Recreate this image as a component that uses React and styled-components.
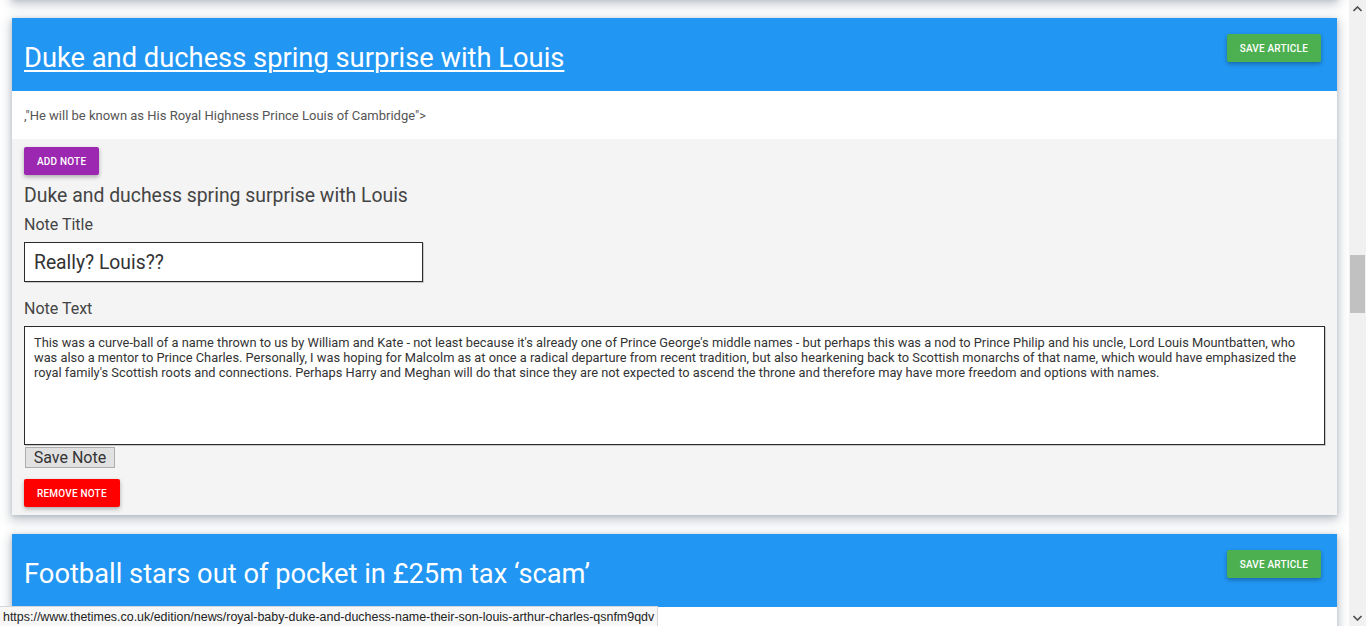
import styled, { createGlobalStyle } from "styled-components";

const GlobalStyle = createGlobalStyle`
  html, body {
    margin: 0;
    padding: 0;
    background: #ffffff;
    overflow: hidden;
  }
  body {
    font-family: Roboto, "Liberation Sans", sans-serif;
  }
`;

const noteText =
  "This was a curve-ball of a name thrown to us by William and Kate - not least because it's already one of Prince George's middle names - but perhaps this was a nod to Prince Philip and his uncle, Lord Louis Mountbatten, who was also a mentor to Prince Charles. Personally, I was hoping for Malcolm as at once a radical departure from recent tradition, but also hearkening back to Scottish monarchs of that name, which would have emphasized the royal family's Scottish roots and connections. Perhaps Harry and Meghan will do that since they are not expected to ascend the throne and therefore may have more freedom and options with names.";

export default function App() {
  return (
    <>
      <GlobalStyle />
      <Screen>
        <Viewport>
          <Feed>
            <Card $stub />

            <Card>
              <CardHeader>
                <Title href="#" $link>
                  Duke and duchess spring surprise with Louis
                </Title>
                <MiniButton $bg="#4caf50">Save Article</MiniButton>
              </CardHeader>
              <Summary>
                ,"He will be known as His Royal Highness Prince Louis of
                Cambridge"&gt;
              </Summary>
              <NotePanel>
                <MiniButton $bg="#9c27b0">Add Note</MiniButton>
                <NoteHeading>Duke and duchess spring surprise with Louis</NoteHeading>
                <FieldLabel>Note Title</FieldLabel>
                <TitleInput defaultValue="Really? Louis??" />
                <FieldLabel $gap={17}>Note Text</FieldLabel>
                <NoteArea defaultValue={noteText} />
                <SaveNote>Save Note</SaveNote>
                <MiniButton $bg="#ff0000" $top={11}>
                  Remove Note
                </MiniButton>
              </NotePanel>
            </Card>

            <Card>
              <CardHeader>
                <Title as="div">
                  Football stars out of pocket in £25m tax ‘scam’
                </Title>
                <MiniButton $bg="#4caf50">Save Article</MiniButton>
              </CardHeader>
              <Summary />
            </Card>
          </Feed>
        </Viewport>

        <Scrollbar>
          <ScrollArrow>
            <svg width="9" height="6" viewBox="0 0 9 6">
              <path d="M0.5 5 L4.5 1 L8.5 5" fill="none" stroke="#505050" strokeWidth="1.6" />
            </svg>
          </ScrollArrow>
          <Track>
            <Thumb />
          </Track>
          <ScrollArrow>
            <svg width="9" height="6" viewBox="0 0 9 6">
              <path d="M0.5 1 L4.5 5 L8.5 1" fill="none" stroke="#505050" strokeWidth="1.6" />
            </svg>
          </ScrollArrow>
        </Scrollbar>
      </Screen>

      <StatusBubble>
        https://www.thetimes.co.uk/edition/news/royal-baby-duke-and-duchess-name-their-son-louis-arthur-charles-qsnfm9qdv
      </StatusBubble>
    </>
  );
}

const Screen = styled.div`
  width: 1366px;
  height: 626px;
  display: flex;
  overflow: hidden;
`;

const Viewport = styled.div`
  flex: 1;
  overflow: hidden;
  padding: 0 12px;
`;

const Feed = styled.div`
  display: flex;
  flex-direction: column;
  gap: 19px;
  margin-top: -61px;
`;

const Card = styled.div`
  background: #ffffff;
  height: ${(p) => (p.$stub ? "60px" : "auto")};
  flex-shrink: 0;
  box-shadow: 0 4px 10px 2px rgba(60, 80, 100, 0.28),
    0 1px 4px rgba(60, 80, 100, 0.2);
`;

const CardHeader = styled.div`
  height: 73px;
  box-sizing: border-box;
  background: #2196f3;
  display: flex;
  justify-content: space-between;
  align-items: flex-start;
  padding: 16px 16px 0 12px;
`;

const Title = styled.a`
  margin-top: 8px;
  font-size: 27.3px;
  line-height: 33px;
  font-weight: 400;
  color: #ffffff;
  text-decoration: ${(p) => (p.$link ? "underline" : "none")};
  text-decoration-thickness: 1.5px;
  text-underline-offset: 3px;
`;

const MiniButton = styled.button`
  align-self: flex-start;
  height: 28px;
  margin-top: ${(p) => p.$top || 0}px;
  padding: 0 13px;
  border: none;
  border-radius: 2px;
  background: ${(p) => p.$bg};
  color: #ffffff;
  font-family: Roboto, sans-serif;
  font-size: 10px;
  font-weight: 500;
  letter-spacing: 0.2px;
  text-transform: uppercase;
  box-shadow: 0 2px 4px rgba(0, 0, 0, 0.3);
  cursor: pointer;
`;

const Summary = styled.div`
  height: 48px;
  display: flex;
  align-items: center;
  padding: 0 12px;
  font-size: 13px;
  color: #555555;
`;

const NotePanel = styled.div`
  background: #f4f4f4;
  padding: 8px 12px 8px;
  display: flex;
  flex-direction: column;
  align-items: flex-start;
`;

const NoteHeading = styled.div`
  margin-top: 10px;
  font-size: 19.4px;
  line-height: 22px;
  color: #444444;
`;

const FieldLabel = styled.div`
  margin-top: ${(p) => p.$gap || 8}px;
  font-size: 16px;
  line-height: 19px;
  color: #444444;
`;

const TitleInput = styled.input`
  margin-top: 8px;
  width: 399px;
  height: 40px;
  box-sizing: border-box;
  padding: 0 9px;
  border: 1px solid #2b2b2b;
  box-shadow: 1px 1px 0 #c8c8c8;
  background: #ffffff;
  font-family: Roboto, sans-serif;
  font-size: 19.3px;
  color: #333333;
  outline: none;
`;

const NoteArea = styled.textarea`
  margin-top: 8px;
  width: 100%;
  height: 119px;
  box-sizing: border-box;
  padding: 8px 27px 8px 9px;
  border: 1px solid #2b2b2b;
  box-shadow: 1px 1px 0 #c8c8c8;
  background: #ffffff;
  resize: none;
  font-family: Roboto, sans-serif;
  font-size: 12.83px;
  line-height: 15px;
  color: #333333;
  outline: none;
`;

const SaveNote = styled.button`
  margin: 2px 0 0 1px;
  width: 90px;
  height: 21px;
  padding: 0;
  border: 1px solid #adadad;
  background: #e1e1e1;
  font-family: Roboto, sans-serif;
  font-size: 16px;
  line-height: 19px;
  color: #333333;
`;

const Scrollbar = styled.div`
  width: 17px;
  flex-shrink: 0;
  background: #f1f1f1;
  display: flex;
  flex-direction: column;
`;

const ScrollArrow = styled.div`
  height: 17px;
  display: flex;
  align-items: center;
  justify-content: center;
`;

const Track = styled.div`
  flex: 1;
  display: flex;
  justify-content: center;
`;

const Thumb = styled.div`
  width: 15px;
  height: 58px;
  margin-top: 238px;
  background: #c1c1c1;
`;

const StatusBubble = styled.div`
  position: fixed;
  left: 0;
  bottom: 0;
  height: 20px;
  box-sizing: border-box;
  padding: 0 3px;
  display: flex;
  align-items: center;
  background: #f7f7f7;
  border-top: 1px solid #d6d6d6;
  border-right: 1px solid #d6d6d6;
  font-family: "Liberation Sans", Arial, sans-serif;
  font-size: 12.45px;
  color: #222222;
  white-space: nowrap;
`;
